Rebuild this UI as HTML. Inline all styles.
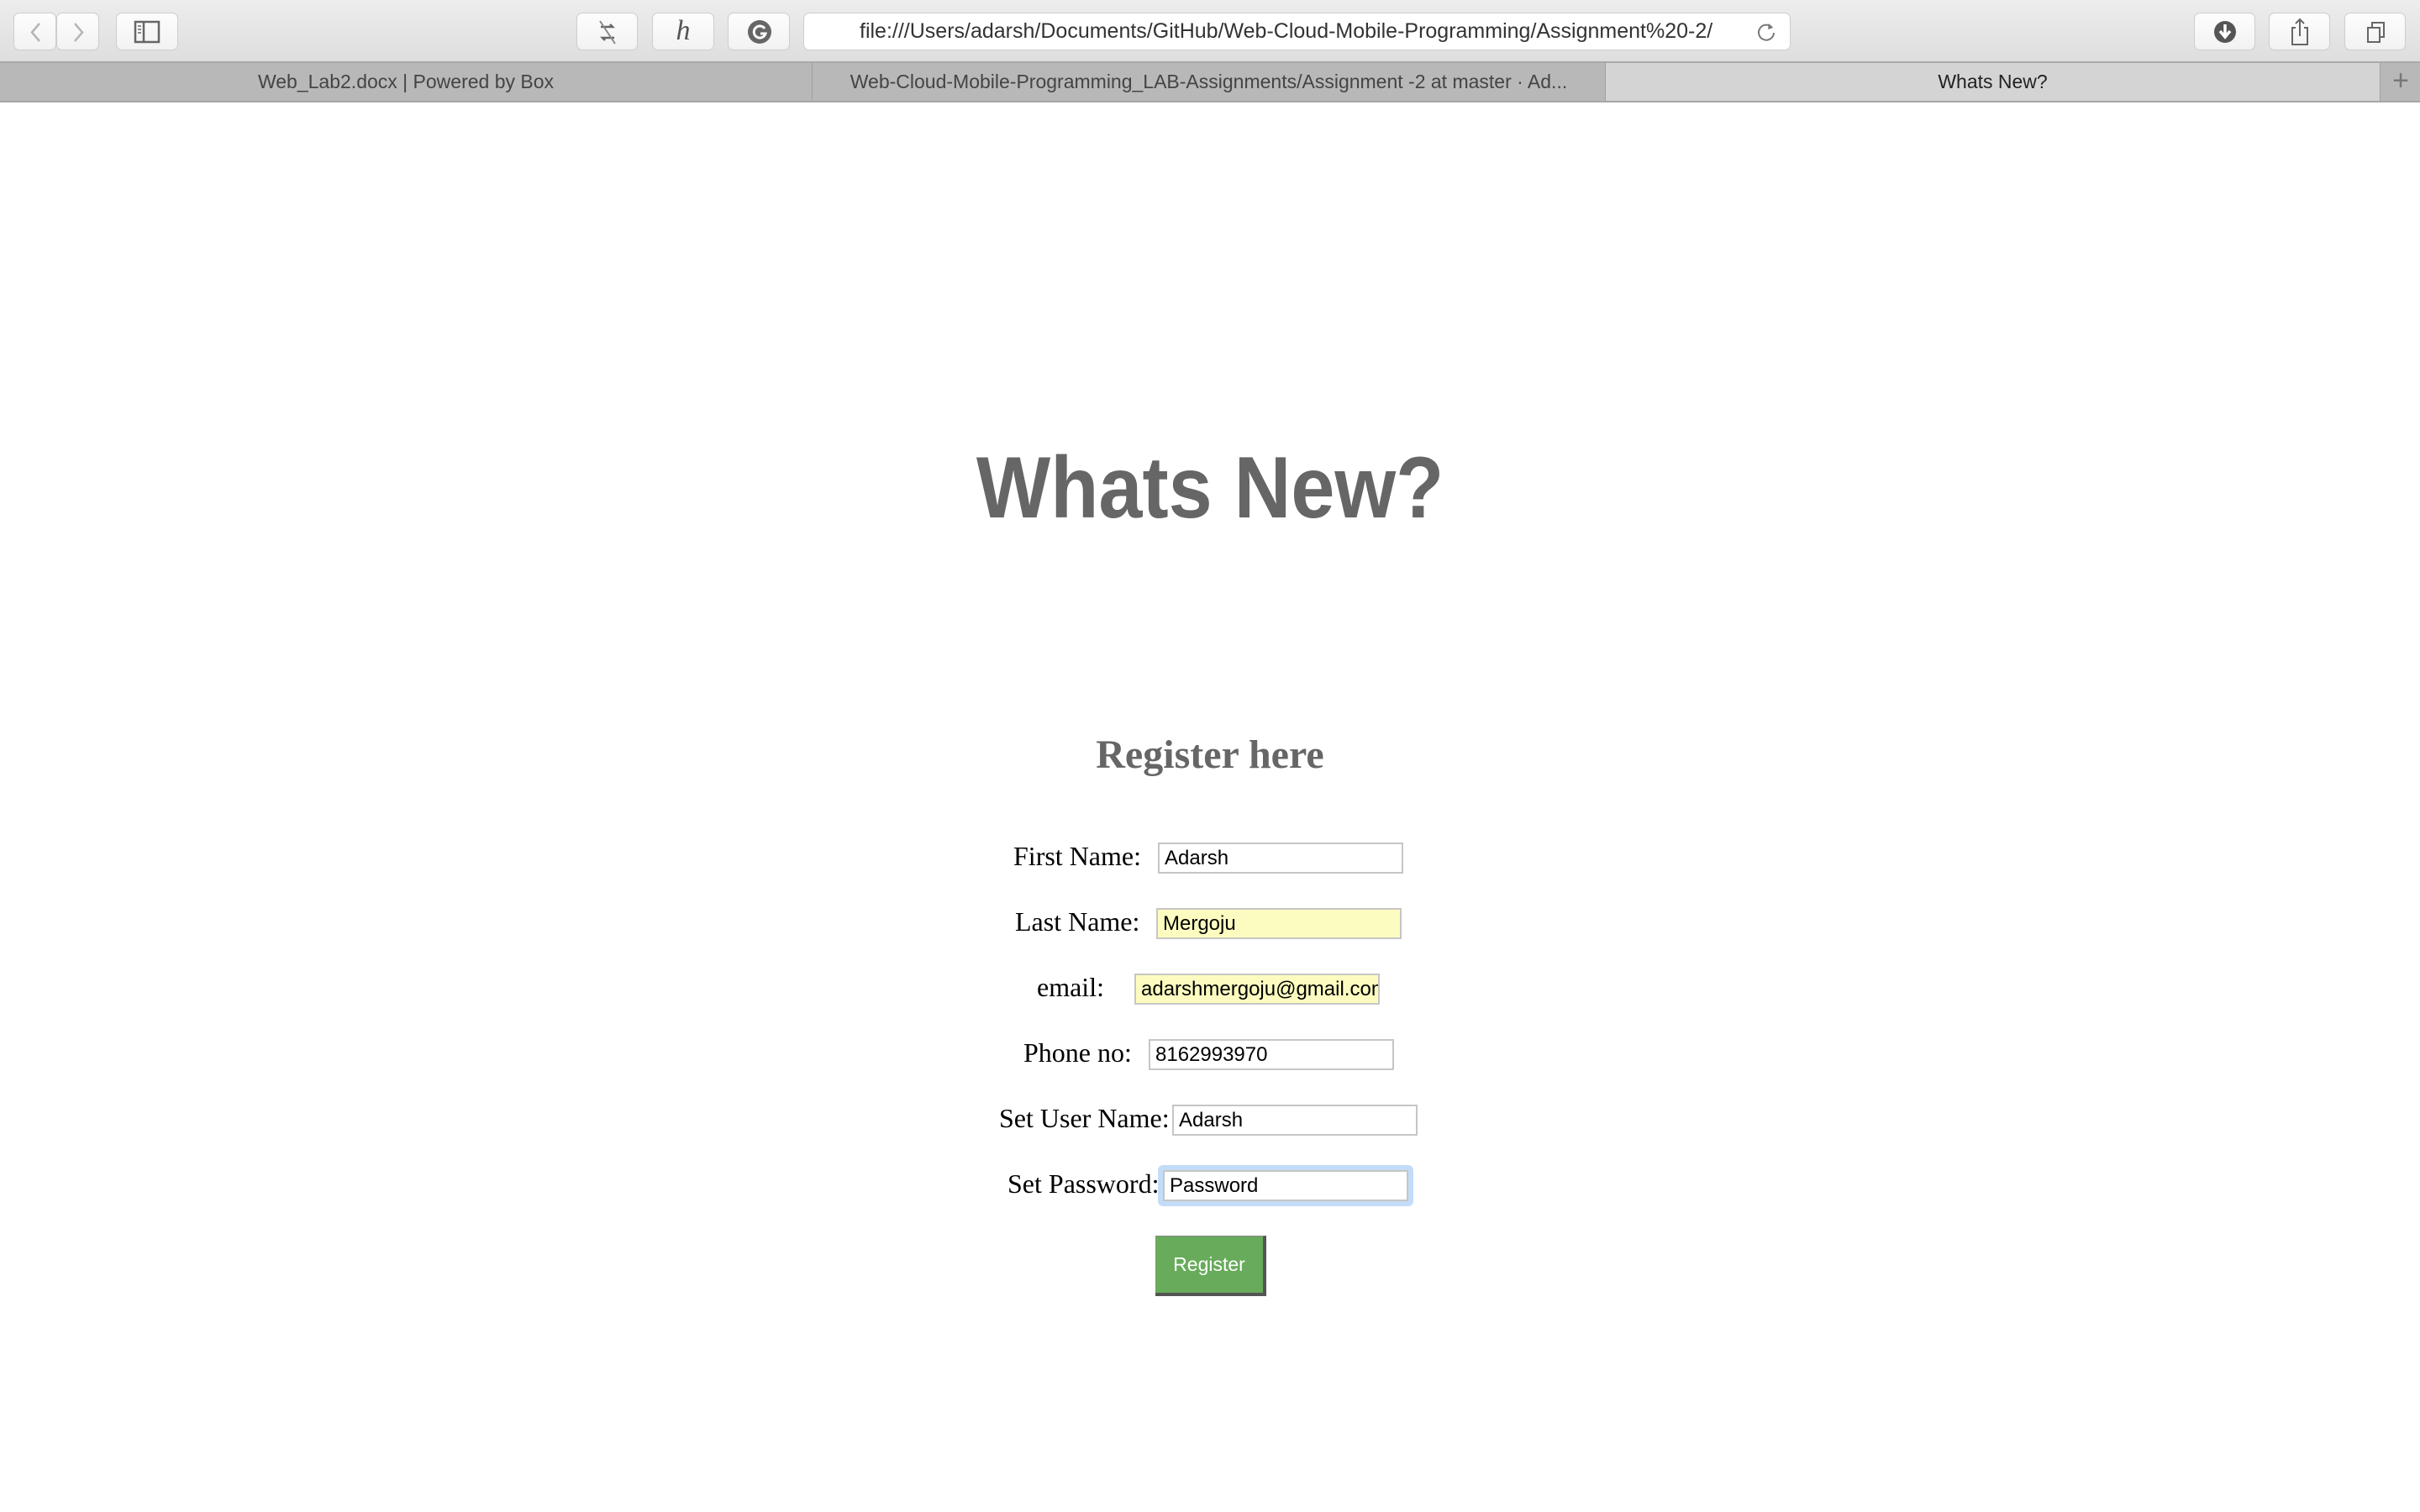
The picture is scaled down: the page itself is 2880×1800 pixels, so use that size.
<!DOCTYPE html>
<html><head><meta charset="utf-8"><style>
*{box-sizing:border-box;margin:0;padding:0}
html,body{width:2880px;height:1800px;overflow:hidden;background:#fff;font-family:"Liberation Sans",sans-serif}
.abs{position:absolute}
.tb{left:0;top:0;width:2880px;height:75px;background:linear-gradient(#ededed,#dedede);border-bottom:2px solid #a9a9a9}
.btn{position:absolute;top:15px;height:45px;background:linear-gradient(#fdfdfd,#f2f2f2);border:1px solid #cdcdcd;border-radius:7px}
.tabs{left:0;top:75px;width:2880px;height:47px;background:#b8b8b8;border-bottom:2px solid #a6a6a6}
.tab{position:absolute;top:0;height:45px;font-size:23px;color:#444;text-align:center;line-height:45px;white-space:nowrap;overflow:hidden}
.lbl{position:absolute;font-family:"Liberation Serif",serif;font-size:32px;line-height:32px;color:#000;white-space:nowrap}
.inp{position:absolute;width:292px;height:37px;border:2px solid #c6c6c6;background:#fff;font-size:24px;color:#000;padding-left:6px;line-height:33px;white-space:nowrap;overflow:hidden}
.yel{background:#fdfcc0}
</style></head><body>
<div class="abs tb"></div>
<div class="btn" style="left:16px;width:51px"><svg width="51" height="45"><path d="M30 12 L21 22.5 L30 33" fill="none" stroke="#b5b5b5" stroke-width="2.5"/></svg></div>
<div class="btn" style="left:67px;width:51px"><svg width="51" height="45"><path d="M21 12 L30 22.5 L21 33" fill="none" stroke="#b5b5b5" stroke-width="2.5"/></svg></div>
<div class="btn" style="left:138px;width:74px"><svg width="74" height="45"><rect x="22" y="10" width="28" height="24" fill="none" stroke="#666" stroke-width="2.5"/><line x1="32" y1="10" x2="32" y2="34" stroke="#666" stroke-width="2.5"/><path d="M25 15h4M25 19h4M25 23h4" stroke="#666" stroke-width="1.5"/></svg></div>
<div class="btn" style="left:686px;width:73px"><svg width="73" height="45"><path d="M28 16h14l-3-3M44 29H30l3 3" fill="none" stroke="#666" stroke-width="2.5"/><line x1="27" y1="9" x2="45" y2="36" stroke="#888" stroke-width="2"/></svg></div>
<div class="btn" style="left:776px;width:74px;font-family:'Liberation Serif',serif;font-style:italic;font-size:34px;color:#555;text-align:center;line-height:42px">h</div>
<div class="btn" style="left:866px;width:74px"><svg width="74" height="45"><circle cx="37" cy="22" r="14" fill="#666"/><path d="M43 18a7 7 0 1 0 1 6h-6" fill="none" stroke="#fff" stroke-width="3"/></svg></div>
<div class="btn" style="left:956px;width:1175px;background:#fff;font-size:25px;color:#333;line-height:43px;padding-left:66px;white-space:nowrap">file:///Users/adarsh/Documents/GitHub/Web-Cloud-Mobile-Programming/Assignment%20-2/<svg style="position:absolute;right:14px;top:9px" width="26" height="26"><path d="M19 8a9 9 0 1 0 2 6" fill="none" stroke="#777" stroke-width="2"/><path d="M15 3l5 5-6 2z" fill="#777"/></svg></div>
<div class="btn" style="left:2611px;width:73px"><svg width="73" height="45"><circle cx="36" cy="22" r="13" fill="#555"/><path d="M36 13v14M30 21l6 7 6-7" fill="none" stroke="#fff" stroke-width="3.5"/></svg></div>
<div class="btn" style="left:2700px;width:73px"><svg width="73" height="45"><path d="M31 17h-4v20h18V17h-4M36 7v20M31 12l5-5 5 5" fill="none" stroke="#666" stroke-width="2"/></svg></div>
<div class="btn" style="left:2790px;width:73px"><svg width="73" height="45"><rect x="27" y="17" width="14" height="17" fill="none" stroke="#666" stroke-width="2"/><path d="M32 17v-6h14v17h-5" fill="none" stroke="#666" stroke-width="2"/></svg></div>
<div class="abs tabs">
<div class="tab" style="left:0;width:967px;border-right:1px solid #a0a0a0">Web_Lab2.docx | Powered by Box</div>
<div class="tab" style="left:967px;width:944px;border-right:1px solid #a0a0a0">Web-Cloud-Mobile-Programming_LAB-Assignments/Assignment -2 at master · Ad...</div>
<div class="tab" style="left:1911px;width:922px;background:#d4d4d4;color:#222;border-right:1px solid #a0a0a0">Whats New?</div>
<div class="tab" style="left:2834px;width:46px;font-size:34px;color:#777;line-height:43px">+</div>
</div>

<div class="abs" style="left:0;width:2880px;top:521px;text-align:center;font-weight:bold;font-size:104px;line-height:120px;color:#666"><span style="display:inline-block;transform:scaleX(0.9)">Whats New?</span></div>
<div class="abs" style="left:0;width:2880px;top:872px;text-align:center;font-family:'Liberation Serif',serif;font-weight:bold;font-size:48px;line-height:54px;color:#666">Register here</div>

<div class="lbl" style="left:1206px;top:1003px">First Name:</div>
<div class="inp" style="left:1378px;top:1003px">Adarsh</div>
<div class="lbl" style="left:1208px;top:1081px">Last Name:</div>
<div class="inp yel" style="left:1376px;top:1081px">Mergoju</div>
<div class="lbl" style="left:1234px;top:1159px">email:</div>
<div class="inp yel" style="left:1350px;top:1159px">adarshmergoju@gmail.com</div>
<div class="lbl" style="left:1218px;top:1237px">Phone no:</div>
<div class="inp" style="left:1367px;top:1237px">8162993970</div>
<div class="lbl" style="left:1189px;top:1315px">Set User Name:</div>
<div class="inp" style="left:1395px;top:1315px">Adarsh</div>
<div class="lbl" style="left:1199px;top:1393px">Set Password:</div>
<div class="abs" style="left:1378px;top:1387px;width:304px;height:49px;border-radius:6px;background:#c3dcf8"></div>
<div class="inp" style="left:1384px;top:1393px">Password</div>
<div class="abs" style="left:1375px;top:1471px;width:132px;height:72px;background:#67ab5b;border-right:4px solid #555;border-bottom:4px solid #555;border-top:1px solid #888;color:#fff;font-size:23px;text-align:center;line-height:66px">Register</div>
</body></html>
